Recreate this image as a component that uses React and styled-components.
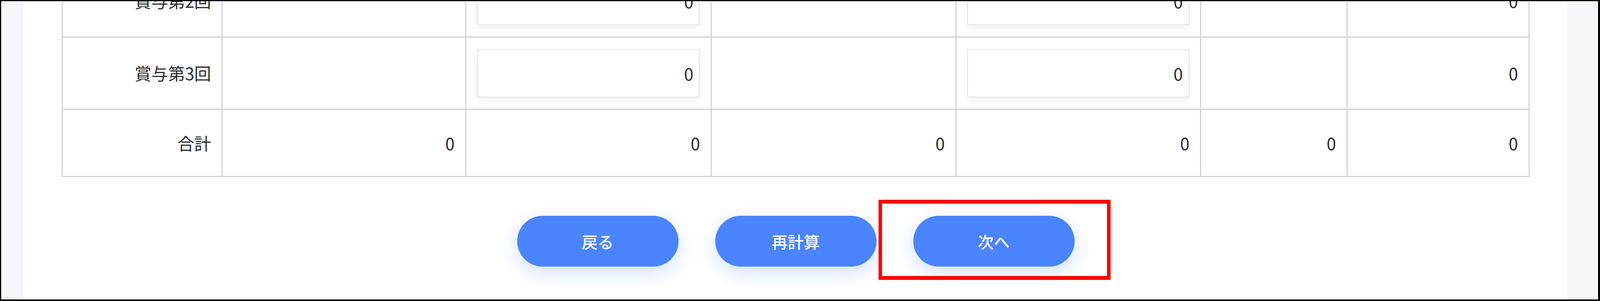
import React from "react";
import styled, { createGlobalStyle } from "styled-components";

const GlobalStyle = createGlobalStyle`
    html, body {
        margin: 0;
        padding: 0;
        background: #ffffff;
    }
    * {
        box-sizing: border-box;
    }
`;

// column widths of the summary table, as share of the table
const columns = [441, 672, 677, 675, 675, 404, 502];
const total = columns.reduce((a, b) => a + b, 0);

const rows = [
    { label: "賞与第2回", cells: ["", { input: "0" }, "", { input: "0" }, "", "0"] },
    { label: "賞与第3回", cells: ["", { input: "0" }, "", { input: "0" }, "", "0"] },
    { label: "合計", total: true, cells: ["0", "0", "0", "0", "0", "0"] },
];

const App = () => {
    return (
        <>
            <GlobalStyle />
            <Frame>
                <SideStrip $width={57} />
                <Content>
                    <Table>
                        <colgroup>
                            {columns.map((w, i) => (
                                <col key={i} style={{ width: `${(w / total) * 100}%` }} />
                            ))}
                        </colgroup>
                        <tbody>
                            {rows.map((row) => (
                                <Row key={row.label} $total={row.total}>
                                    <Cell>{row.label}</Cell>
                                    {row.cells.map((cell, i) => (
                                        <Cell key={i}>
                                            {typeof cell === "object" ? (
                                                <AmountInput defaultValue={cell.input} />
                                            ) : (
                                                cell
                                            )}
                                        </Cell>
                                    ))}
                                </Row>
                            ))}
                        </tbody>
                    </Table>
                    <ButtonRow>
                        <PillButton>戻る</PillButton>
                        <PillButton>再計算</PillButton>
                        <Highlight>
                            <PillButton>次へ</PillButton>
                        </Highlight>
                    </ButtonRow>
                </Content>
                <SideStrip $width={79} />
            </Frame>
        </>
    );
};

export default App;

// Styled Components
const Frame = styled.div`
    display: flex;
    width: 100%;
    height: 770px;
    border: 3px solid #000;
    border-right-width: 5px;
    border-bottom-width: 4px;
    overflow: hidden;
    font-family: "Noto Sans CJK JP", "Noto Sans", sans-serif;
    color: #2b2b2b;
`;

const SideStrip = styled.div`
    flex: 0 0 ${(p) => p.$width}px;
    background: #f4f6fa;
`;

const Content = styled.div`
    flex: 1;
    min-width: 0;
    background: #ffffff;
    padding: 0 96px 0 98px;
    overflow: hidden;
`;

const Table = styled.table`
    width: 100%;
    table-layout: fixed;
    border-collapse: collapse;
    margin-top: -95px;
    border: 3px solid #d4d4d4;
`;

const Row = styled.tr`
    height: ${(p) => (p.$total ? 172 : 185)}px;
`;

const Cell = styled.td`
    border: 3px solid #d4d4d4;
    padding: 0 27px;
    text-align: right;
    vertical-align: middle;
    font-size: 43px;
    line-height: 1.2;
`;

const AmountInput = styled.input`
    display: block;
    width: 100%;
    min-width: 0;
    height: 123px;
    border: 2px solid #e4e4e4;
    border-radius: 2px;
    background: #ffffff;
    box-shadow: 0 9px 14px rgba(0, 0, 0, 0.05);
    padding: 0 15px;
    text-align: right;
    font-family: inherit;
    font-size: 43px;
    color: #2b2b2b;
    outline: none;
`;

const ButtonRow = styled.div`
    display: flex;
    justify-content: center;
    gap: 94px;
    margin-top: 99px;
`;

const PillButton = styled.button`
    width: 413px;
    height: 130px;
    border: none;
    border-radius: 65px;
    background: #4a84ff;
    color: #ffffff;
    font-family: inherit;
    font-size: 41px;
    font-weight: 500;
    box-shadow: 0 16px 48px rgba(74, 132, 255, 0.24);
    cursor: pointer;
`;

const Highlight = styled.div`
    position: relative;
    display: flex;

    &::after {
        content: "";
        position: absolute;
        top: -41px;
        bottom: -34px;
        left: -89px;
        right: -92px;
        border: 10px solid #ff0000;
        border-left-width: 9px;
        border-right-width: 9px;
        pointer-events: none;
    }
`;
